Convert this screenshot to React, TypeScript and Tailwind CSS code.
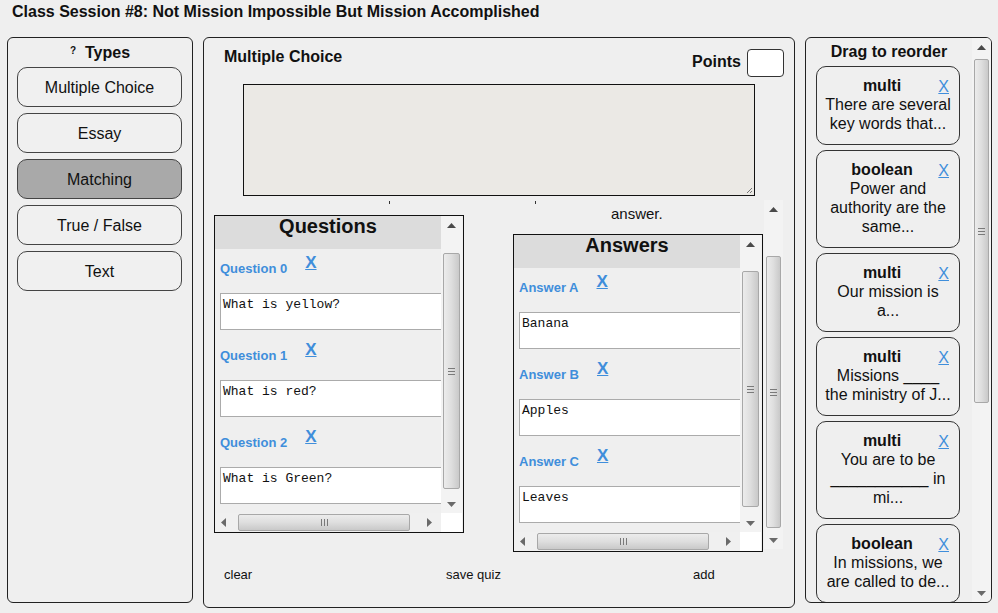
import React from "react";

const BLUE = "text-[#3f8edb]";

function UpArrow() {
  return (
    <svg width="9" height="5" viewBox="0 0 9 5"><path d="M0 5 L4.5 0 L9 5 Z" fill="#4a4a4a" /></svg>
  );
}
function DownArrow() {
  return (
    <svg width="9" height="5" viewBox="0 0 9 5"><path d="M0 0 L4.5 5 L9 0 Z" fill="#6a6a6a" /></svg>
  );
}
function LeftArrow() {
  return (
    <svg width="5" height="9" viewBox="0 0 5 9"><path d="M5 0 L0 4.5 L5 9 Z" fill="#6a6a6a" /></svg>
  );
}
function RightArrow() {
  return (
    <svg width="5" height="9" viewBox="0 0 5 9"><path d="M0 0 L5 4.5 L0 9 Z" fill="#6a6a6a" /></svg>
  );
}

function VGrip() {
  return (
    <div className="flex flex-col gap-[2px]">
      <div className="h-[1px] w-[7px] bg-[#7a7a7a]" />
      <div className="h-[1px] w-[7px] bg-[#7a7a7a]" />
      <div className="h-[1px] w-[7px] bg-[#7a7a7a]" />
    </div>
  );
}
function HGrip() {
  return (
    <div className="flex gap-[2px]">
      <div className="h-[7px] w-[1px] bg-[#7a7a7a]" />
      <div className="h-[7px] w-[1px] bg-[#7a7a7a]" />
      <div className="h-[7px] w-[1px] bg-[#7a7a7a]" />
    </div>
  );
}

function VScroll({ height, top, thumb, className = "" }: { height: number; top: number; thumb: number; className?: string }) {
  return (
    <div className={"relative shrink-0 bg-[#f3f3f3] " + className} style={{ height }}>
      <div className="flex h-[18px] items-center justify-center"><UpArrow /></div>
      <div
        className="absolute left-[2px] right-[2px] flex items-center justify-center rounded-[2px] border border-[#a8a8a8] bg-gradient-to-r from-[#ececec] via-[#dedede] to-[#c9c9c9]"
        style={{ top, height: thumb }}
      >
        <VGrip />
      </div>
      <div className="absolute bottom-0 left-0 right-0 flex h-[18px] items-center justify-center"><DownArrow /></div>
    </div>
  );
}

function HScroll() {
  return (
    <div className="flex h-[19px] shrink-0">
      <div className="relative w-[226px] bg-[#f0f0f0]">
        <div className="absolute left-[6px] top-[5px]"><LeftArrow /></div>
        <div className="absolute left-[23px] top-[1px] flex h-[17px] w-[172px] items-center justify-center rounded-[2px] border border-[#a8a8a8] bg-gradient-to-b from-[#ececec] via-[#dedede] to-[#c9c9c9]">
          <HGrip />
        </div>
        <div className="absolute left-[212px] top-[5px]"><RightArrow /></div>
      </div>
      <div className="w-[21px] bg-white" />
    </div>
  );
}

function Entry({ label, value, first }: { label: string; value: string; first?: boolean }) {
  return (
    <div className={first ? "" : "mt-[6px]"}>
      <div className="flex h-[44px] items-start pl-[5px]">
        <span className={"mt-[12px] text-[13px] font-bold leading-[15px] " + BLUE}>{label}</span>
        <span className={"ml-[18px] mt-[5px] text-[17px] font-bold leading-[18px] underline " + BLUE}>X</span>
      </div>
      <div className="ml-[5px] h-[37px] w-[240px] border border-[#ababab] bg-white px-[2px] pt-[3px] font-['Liberation_Mono',monospace] text-[13px] leading-[16px] text-[#111]">
        {value}
      </div>
    </div>
  );
}

function ListBox({ title, items, thumbTop }: { title: string; items: [string, string][]; thumbTop: number }) {
  return (
    <div className="flex h-[318px] w-[250px] flex-col border border-[#111] bg-[#efefef]">
      <div className="flex h-[297px]">
        <div className="w-[226px] overflow-hidden">
          <div className="flex h-[33px] items-start justify-center bg-[#dcdcdc] text-[20px] font-bold leading-[20px] text-[#111]">
            {title}
          </div>
          {items.map(([l, v], i) => (
            <Entry key={l} label={l} value={v} first={i === 0} />
          ))}
        </div>
        <VScroll height={297} top={thumbTop} thumb={236} className="w-[21px]" />
      </div>
      <HScroll />
    </div>
  );
}

function TypeButton({ label, active }: { label: string; active?: boolean }) {
  return (
    <div
      className={
        "flex h-[40px] w-[165px] items-center justify-center rounded-[10px] border border-[#444] pt-[1px] text-[16px] text-[#111] " +
        (active ? "bg-[#a9a9a9]" : "bg-[#f0f0f0]")
      }
    >
      {label}
    </div>
  );
}

function Card({ kind, lines }: { kind: string; lines: string[] }) {
  return (
    <div className="relative w-[144px] shrink-0 rounded-[10px] border border-[#333] bg-[#efefef] pb-[11px] pt-[9px] text-center text-[16px] leading-[19px] text-[#111]">
      <div className="pr-[12px] font-bold">{kind}</div>
      <div className={"absolute right-[10px] top-[10px] text-[16px] leading-[19px] underline " + BLUE}>X</div>
      {lines.map((l, i) => (
        <div key={i} className="whitespace-nowrap">{l}</div>
      ))}
    </div>
  );
}

export default function App() {
  return (
    <div className="h-[613px] w-[998px] overflow-hidden bg-[#efefef] font-['Liberation_Sans',Arial,sans-serif] text-[#111]">
      <div className="h-[37px] pl-[12px] pt-[3px] text-[16px] font-bold leading-[18px]">
        Class Session #8: Not Mission Impossible But Mission Accomplished
      </div>
      <div className="flex items-start gap-[10px] pl-[7px]">
        {/* Left panel */}
        <div className="h-[566px] w-[186px] rounded-[6px] border border-[#222] pt-[5px]">
          <div className="flex h-[20px] items-center justify-center gap-[9px] font-bold">
            <span className="-mt-[5px] text-[10px]">?</span>
            <span className="text-[16px]">Types</span>
          </div>
          <div className="ml-[9px] mt-[4px] flex flex-col gap-[6px]">
            <TypeButton label="Multiple Choice" />
            <TypeButton label="Essay" />
            <TypeButton label="Matching" active />
            <TypeButton label="True / False" />
            <TypeButton label="Text" />
          </div>
        </div>

        {/* Middle panel */}
        <div className="h-[571px] w-[592px] rounded-[6px] border border-[#222]">
          <div className="flex h-[46px] items-start justify-between pl-[20px] pr-[10px]">
            <div className="mt-[10px] text-[16px] font-bold leading-[18px]">Multiple Choice</div>
            <div className="mt-[11px] flex items-center gap-[6px]">
              <span className="-mt-[3px] text-[16px] font-bold">Points</span>
              <div className="h-[28px] w-[37px] rounded-[4px] border border-[#333] bg-white" />
            </div>
          </div>
          <div className="relative ml-[39px] h-[112px] w-[512px] border border-[#111] bg-[#ebe9e5]">
            <svg className="absolute bottom-[1px] right-[1px]" width="8" height="8" viewBox="0 0 8 8">
              <path d="M7 2 L2 7 M7 5 L5 7" stroke="#777" strokeWidth="1" />
            </svg>
          </div>
          <div className="mt-[4px] flex">
            <div className="w-[276px] shrink-0">
              <div className="ml-[185px] mt-[1px] h-[3px] w-[1px] bg-[#333]" />
              <div className="ml-[10px] mt-[11px]">
                <ListBox
                  title="Questions"
                  thumbTop={37}
                  items={[
                    ["Question 0", "What is yellow?"],
                    ["Question 1", "What is red?"],
                    ["Question 2", "What is Green?"],
                  ]}
                />
              </div>
            </div>
            <div className="flex w-[303px] shrink-0">
              <div className="w-[284px] shrink-0">
                <div className="ml-[55px] mt-[1px] h-[3px] w-[1px] bg-[#333]" />
                <div className="ml-[131px] mt-[1px] text-[15px] leading-[18px]">answer.</div>
                <div className="ml-[33px] mt-[11px]">
                  <ListBox
                    title="Answers"
                    thumbTop={36}
                    items={[
                      ["Answer A", "Banana"],
                      ["Answer B", "Apples"],
                      ["Answer C", "Leaves"],
                    ]}
                  />
                </div>
              </div>
              <VScroll height={349} top={56} thumb={272} className="w-[19px]" />
            </div>
          </div>
          <div className="mt-[15px] flex text-[13px] leading-[16px]">
            <div className="ml-[20px] w-[222px]">clear</div>
            <div className="w-[247px]">save quiz</div>
            <div>add</div>
          </div>
        </div>

        {/* Right panel */}
        <div className="flex h-[566px] w-[187px] overflow-hidden rounded-[6px] border border-[#222]">
          <div className="w-[166px] shrink-0 overflow-hidden">
            <div className="mt-[5px] text-center text-[16px] font-bold leading-[18px]">Drag to reorder</div>
            <div className="ml-[10px] mt-[5px] flex flex-col gap-[5px]">
              <Card kind="multi" lines={["There are several", "key words that..."]} />
              <Card kind="boolean" lines={["Power and", "authority are the", "same..."]} />
              <Card kind="multi" lines={["Our mission is", "a..."]} />
              <Card kind="multi" lines={["Missions ____", "the ministry of J..."]} />
              <Card kind="multi" lines={["You are to be", "___________ in", "mi..."]} />
              <Card kind="boolean" lines={["In missions, we", "are called to de..."]} />
            </div>
          </div>
          <VScroll height={564} top={21} thumb={344} className="w-[19px]" />
        </div>
      </div>
    </div>
  );
}
